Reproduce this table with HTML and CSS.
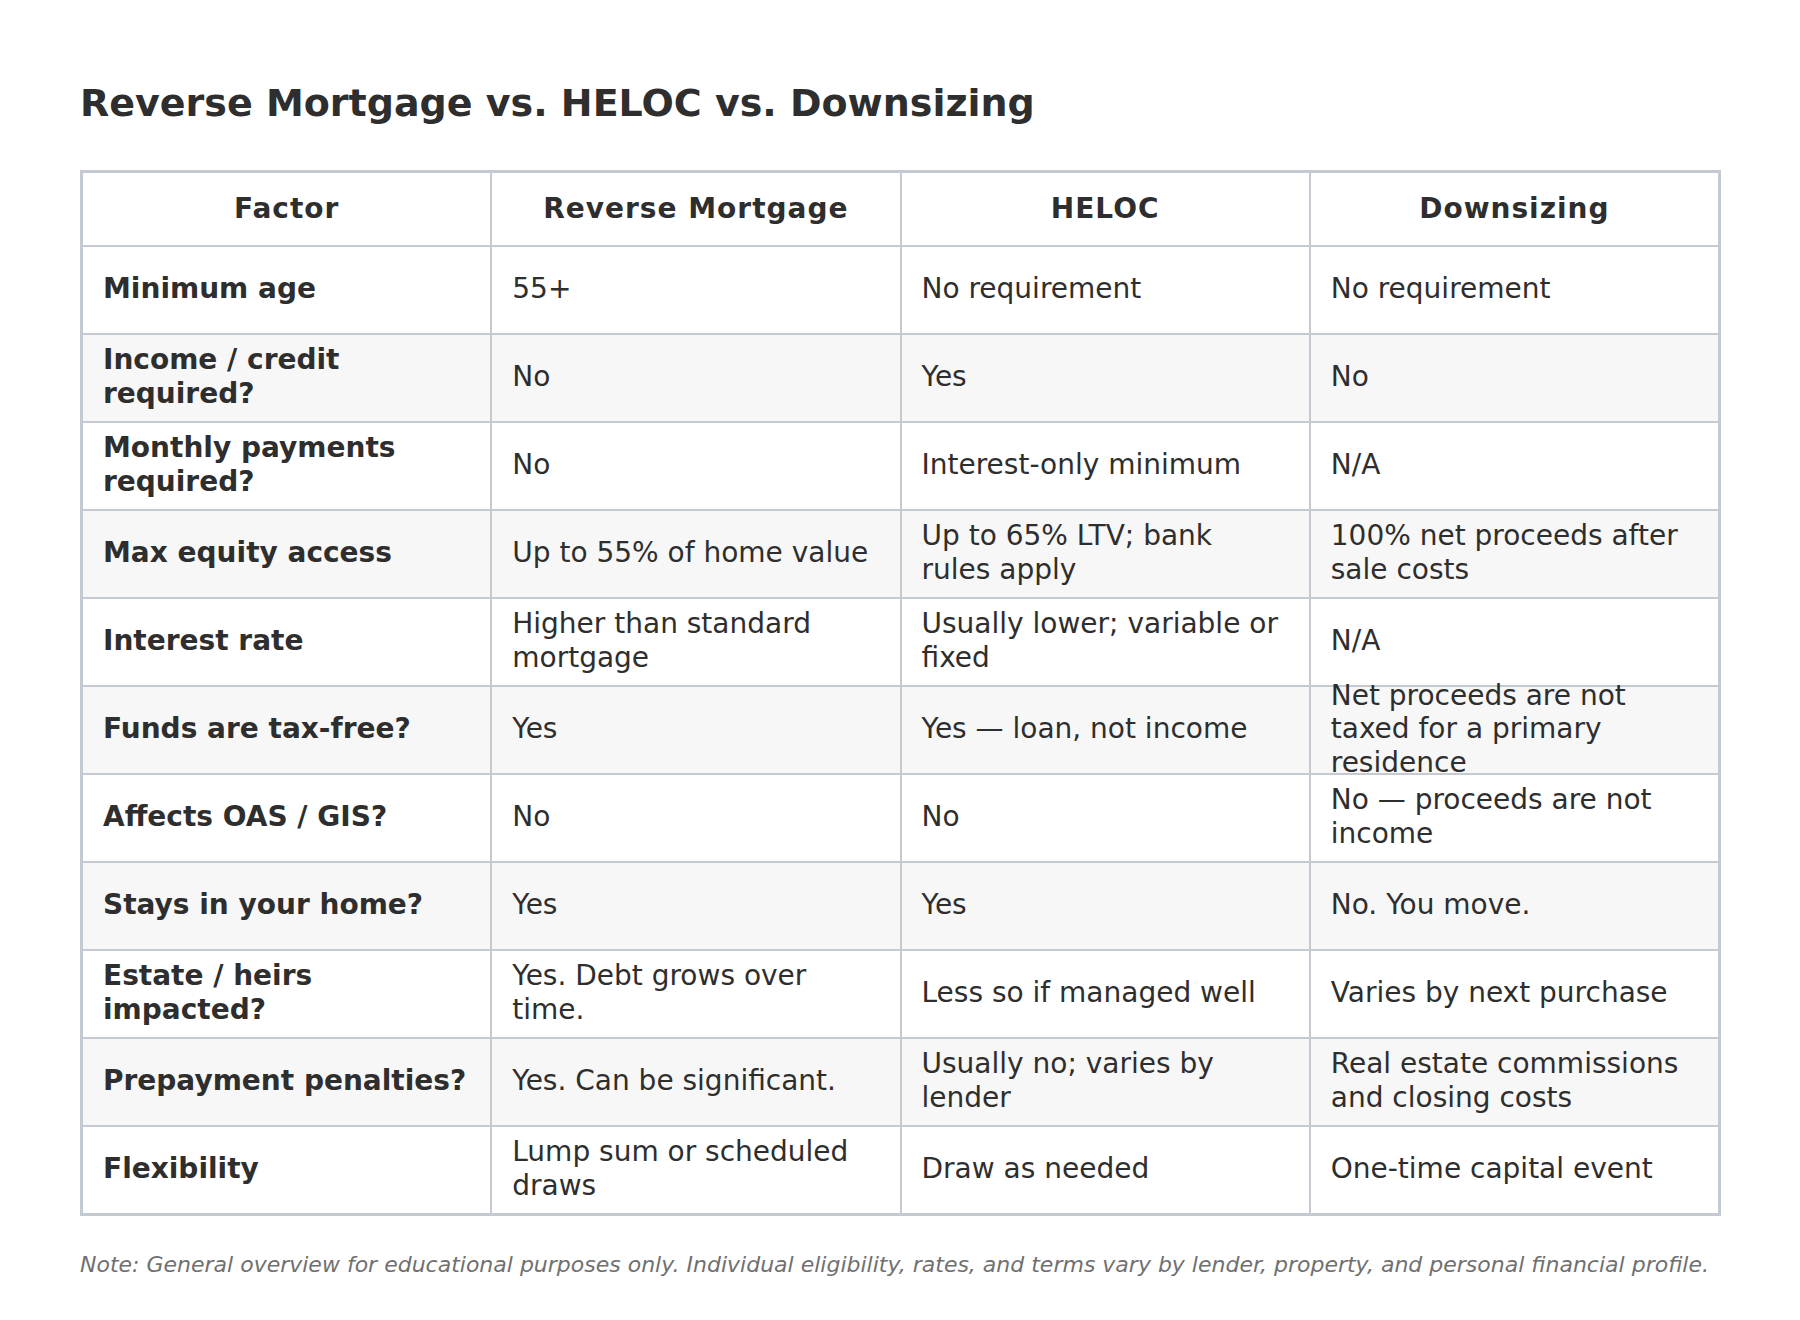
FILE: index.html
```html
<!DOCTYPE html>
<html lang="en">
<head>
<meta charset="utf-8">
<title>Reverse Mortgage vs. HELOC vs. Downsizing</title>
<link rel="stylesheet" href="styles.css">
</head>
<body>
<main class="page">
  <h1 class="title">Reverse Mortgage vs. HELOC vs. Downsizing</h1>
  <div class="grid">
    <div class="row head">
      <div class="cell">Factor</div>
      <div class="cell">Reverse Mortgage</div>
      <div class="cell">HELOC</div>
      <div class="cell">Downsizing</div>
    </div>
    <div class="row">
      <div class="cell key">Minimum age</div>
      <div class="cell">55+</div>
      <div class="cell">No requirement</div>
      <div class="cell">No requirement</div>
    </div>
    <div class="row alt">
      <div class="cell key">Income / credit required?</div>
      <div class="cell">No</div>
      <div class="cell">Yes</div>
      <div class="cell">No</div>
    </div>
    <div class="row">
      <div class="cell key">Monthly payments required?</div>
      <div class="cell">No</div>
      <div class="cell">Interest-only minimum</div>
      <div class="cell">N/A</div>
    </div>
    <div class="row alt">
      <div class="cell key">Max equity access</div>
      <div class="cell">Up to 55% of home value</div>
      <div class="cell">Up to 65% LTV; bank rules apply</div>
      <div class="cell">100% net proceeds after sale costs</div>
    </div>
    <div class="row">
      <div class="cell key">Interest rate</div>
      <div class="cell">Higher than standard mortgage</div>
      <div class="cell">Usually lower; variable or fixed</div>
      <div class="cell">N/A</div>
    </div>
    <div class="row alt">
      <div class="cell key">Funds are tax-free?</div>
      <div class="cell">Yes</div>
      <div class="cell">Yes — loan, not income</div>
      <div class="cell">Net proceeds are not taxed for a primary residence</div>
    </div>
    <div class="row">
      <div class="cell key">Affects OAS / GIS?</div>
      <div class="cell">No</div>
      <div class="cell">No</div>
      <div class="cell">No — proceeds are not income</div>
    </div>
    <div class="row alt">
      <div class="cell key">Stays in your home?</div>
      <div class="cell">Yes</div>
      <div class="cell">Yes</div>
      <div class="cell">No. You move.</div>
    </div>
    <div class="row">
      <div class="cell key">Estate / heirs impacted?</div>
      <div class="cell">Yes. Debt grows over time.</div>
      <div class="cell">Less so if managed well</div>
      <div class="cell">Varies by next purchase</div>
    </div>
    <div class="row alt">
      <div class="cell key">Prepayment penalties?</div>
      <div class="cell">Yes. Can be significant.</div>
      <div class="cell">Usually no; varies by lender</div>
      <div class="cell">Real estate commissions and closing costs</div>
    </div>
    <div class="row">
      <div class="cell key">Flexibility</div>
      <div class="cell">Lump sum or scheduled draws</div>
      <div class="cell">Draw as needed</div>
      <div class="cell">One-time capital event</div>
    </div>
  </div>
  <p class="note">Note: General overview for educational purposes only. Individual eligibility, rates, and terms vary by lender, property, and personal financial profile.</p>
</main>
</body>
</html>
```

FILE: styles.css
```css
html, body {
  margin: 0;
  padding: 0;
  background: #ffffff;
}

body {
  font-family: "DejaVu Sans", Verdana, sans-serif;
  color: #2e2e2e;
}

.page {
  padding: 81px 80px 0 80px;
}

.title {
  margin: 0 0 45px 0;
  font-size: 38px;
  font-weight: bold;
  line-height: normal;
  color: #2e2e2e;
}

.grid {
  display: grid;
  grid-template-columns: repeat(4, minmax(0, 1fr));
  grid-template-rows: 72px repeat(11, 86px);
  gap: 2px;
  width: 1641px;
  box-sizing: border-box;
  border: 3px solid #c3cad2;
  background: #c3cad2;
}

.row {
  display: contents;
}

.cell {
  display: flex;
  align-items: center;
  padding: 0 20px 2px 20px;
  background: #ffffff;
  font-size: 28px;
  line-height: 1.2;
  min-width: 0;
  min-height: 0;
}

.row.alt .cell {
  background: #f7f7f7;
}

.head .cell {
  justify-content: center;
  text-align: center;
  font-weight: bold;
  letter-spacing: 1px;
  padding-bottom: 0;
}

.key {
  font-weight: bold;
}

.note {
  margin: 36px 0 0 0;
  font-size: 22px;
  font-style: italic;
  line-height: normal;
  color: #707070;
}
```
